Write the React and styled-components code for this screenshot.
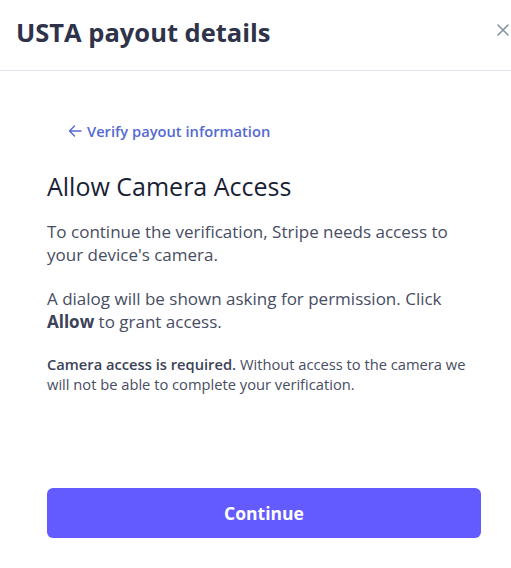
import React from 'react';
import styled, { createGlobalStyle } from 'styled-components';

const GlobalStyle = createGlobalStyle`
  html, body {
    margin: 0;
    padding: 0;
    background: #ffffff;
  }
  body {
    font-family: "Open Sans", "Noto Sans", sans-serif;
    -webkit-font-smoothing: antialiased;
  }
`;

const App = () => {
  return (
    <>
      <GlobalStyle />
      <Modal>
        <Header>
          <Title>USTA payout details</Title>
          <CloseButton aria-label='Close'>
            <svg width='12' height='12' viewBox='0 0 12 12'>
              <path d='M1 1L11 11M11 1L1 11' stroke='#8792a2' strokeWidth='1.6' strokeLinecap='round' />
            </svg>
          </CloseButton>
        </Header>
        <Body>
          <BackLink href='#'>
            <svg width='14' height='12' viewBox='0 0 14 12'>
              <path d='M13 6H1.5M6.5 1L1.5 6L6.5 11' fill='none' stroke='#5469d4' strokeWidth='1.4' strokeLinecap='round' strokeLinejoin='round' />
            </svg>
            Verify payout information
          </BackLink>
          <Heading>Allow Camera Access</Heading>
          <Paragraph>
            To continue the verification, Stripe needs access to your device's camera.
          </Paragraph>
          <Paragraph>
            A dialog will be shown asking for permission. Click <strong>Allow</strong> to grant access.
          </Paragraph>
          <Note>
            <strong>Camera access is required.</strong> Without access to the camera we will not be able to complete your verification.
          </Note>
          <ContinueButton>Continue</ContinueButton>
        </Body>
      </Modal>
    </>
  );
};

export default App;

const Modal = styled.div`
  width: 511px;
  height: 568px;
  background: #ffffff;
  overflow: hidden;
`;

const Header = styled.div`
  display: flex;
  align-items: center;
  justify-content: space-between;
  height: 71px;
  padding: 0 2px 0 16px;
  border-bottom: 1px solid #e3e8ee;
  box-sizing: border-box;
`;

const Title = styled.h1`
  margin: 0 0 6px;
  font-size: 25.5px;
  font-weight: 700;
  color: #2f3349;
`;

const CloseButton = styled.button`
  display: flex;
  align-items: center;
  background: none;
  border: none;
  padding: 0;
  margin-bottom: 10px;
  cursor: pointer;
`;

const Body = styled.div`
  display: flex;
  flex-direction: column;
  align-items: flex-start;
  padding: 50px 30px 0 47px;
`;

const BackLink = styled.a`
  display: flex;
  align-items: center;
  gap: 5px;
  margin-left: 21px;
  font-size: 14.7px;
  line-height: 20px;
  font-weight: 600;
  color: #5469d4;
  text-decoration: none;
`;

const Heading = styled.h2`
  margin: 30px 0 0;
  font-size: 25px;
  line-height: 30px;
  font-weight: 400;
  color: #1a1f36;
`;

const Paragraph = styled.p`
  margin: 19px 0 0;
  font-size: 17px;
  line-height: 23px;
  color: #474d63;

  & + & {
    margin-top: 21px;
  }

  strong {
    color: #3c4257;
  }
`;

const Note = styled.p`
  margin: 21px 0 0;
  font-size: 14.7px;
  line-height: 20px;
  color: #474d63;

  strong {
    font-weight: 600;
    color: #3c4257;
  }
`;

const ContinueButton = styled.button`
  align-self: stretch;
  height: 50px;
  margin-top: 94px;
  border: none;
  border-radius: 6px;
  background: #635bff;
  color: #ffffff;
  font-family: inherit;
  font-size: 17.5px;
  font-weight: 700;
  cursor: pointer;
`;
